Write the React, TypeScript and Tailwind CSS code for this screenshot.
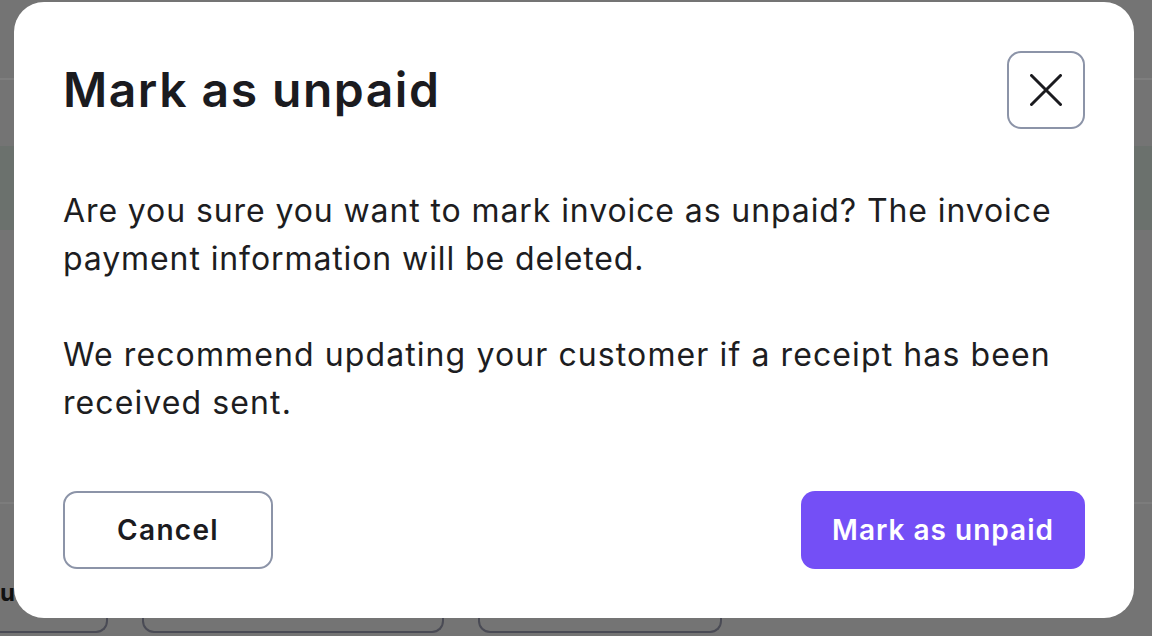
import React from "react";

const font = { fontFamily: "Inter, 'Noto Sans', sans-serif" };

export default function App() {
  return (
    <div className="relative h-[636px] w-[1152px] overflow-hidden bg-[#747474]" style={font}>
      {/* background page (dimmed) */}
      <div className="flex h-full flex-col">
        <div className="h-[80px] border-b-2 border-[#7e7e7e]" />
        <div className="h-[66px]" />
        <div className="h-[84px] bg-[#6b716d]" />
        <div className="h-[274px] border-b-2 border-[#7c7c7c]" />
        <div className="flex flex-1 items-end gap-[34px] pb-[3px]">
          <div className="flex h-[60px] w-[108px] items-start rounded-br-[12px] border-b-2 border-r-2 border-[#4a4b55] pt-[2px]">
            <span className="text-[24px] font-bold tracking-[1px] text-[#111]">us</span>
          </div>
          <div className="h-[60px] w-[302px] rounded-b-[12px] border-2 border-t-0 border-[#4a4b55]" />
          <div className="h-[60px] w-[244px] rounded-b-[12px] border-2 border-t-0 border-[#4a4b55]" />
        </div>
      </div>

      {/* modal */}
      <div className="absolute left-[14px] top-[2px] flex h-[616px] w-[1120px] flex-col rounded-[30px] bg-white p-[49px]">
        <div className="flex items-center justify-between">
          <h2 className="text-[48px] font-semibold leading-none tracking-[1.5px] text-[#1b1b1f]">
            Mark as unpaid
          </h2>
          <button className="flex h-[78px] w-[78px] items-center justify-center rounded-[14px] border-2 border-[#8c94a8] bg-white">
            <svg width="32" height="32" viewBox="0 0 32 32" fill="none">
              <path d="M1.5 1.5 30.5 30.5M30.5 1.5 1.5 30.5" stroke="#1b1b1f" strokeWidth="3" strokeLinecap="round" />
            </svg>
          </button>
        </div>

        <div className="mt-[58px] text-[32px] leading-[48px] tracking-[0.9px] text-[#1d1d21]">
          <p>Are you sure you want to mark invoice as unpaid? The invoice payment information will be deleted.</p>
          <p className="mt-[48px] tracking-[1.1px]">We recommend updating your customer if a receipt has been received sent.</p>
        </div>

        <div className="mt-auto flex items-center justify-between">
          <button className="flex h-[78px] w-[210px] items-center justify-center rounded-[14px] border-2 border-[#8c94a8] bg-white text-[28px] font-semibold tracking-[1.3px] text-[#1b1b1f]">
            Cancel
          </button>
          <button className="flex h-[78px] w-[284px] items-center justify-center rounded-[14px] bg-[#744ff6] text-[28px] font-semibold tracking-[1px] text-white">
            Mark as unpaid
          </button>
        </div>
      </div>
    </div>
  );
}
